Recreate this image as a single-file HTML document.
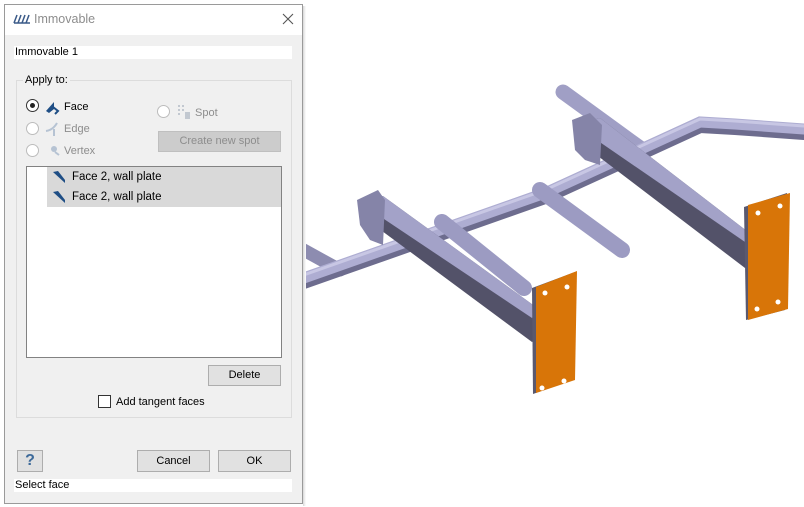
<!DOCTYPE html>
<html><head><meta charset="utf-8"><style>
*{box-sizing:border-box;margin:0;padding:0}
body{width:804px;height:507px;background:#fff;position:relative;overflow:hidden;font-family:"Liberation Sans",sans-serif;font-size:11px;color:#000}
.a{position:absolute}
.dlg{left:4px;top:4px;width:299px;height:500px;background:#f0f0f0;border:1px solid #9a9a9a}
.shadow{left:303px;top:6px;width:3px;height:500px;background:linear-gradient(90deg,#d8d8d8,#fff)}
.tb{left:5px;top:5px;width:297px;height:30px;background:#fff}
.field{background:#fff;height:13px;line-height:13px;padding-left:1px}
.btn{background:#e1e1e1;border:1px solid #adadad;text-align:center;line-height:19px}
.radio{width:13px;height:13px;border:1px solid #333;border-radius:50%;background:#fff}
.radio.dis{border-color:#bcbcbc}
.dis{color:#8d8d8d}
.row{left:47px;width:234px;height:20px;background:#d9d9d9;line-height:20px;padding-left:25px;font-size:11.5px}
.fi{position:absolute;left:6px;top:4px}
</style></head><body>
<svg class="a" style="left:295px;top:60px" width="509" height="350" viewBox="295 60 509 350">
<g stroke-linecap="round" fill="none">
 <line x1="300" y1="248" x2="340" y2="270" stroke="#8d8cb0" stroke-width="13"/>
 <line x1="563" y1="92" x2="640" y2="148" stroke="#a09fc5" stroke-width="15"/>
 <polyline points="298,283 545,196 700,125 735,127 804,132" stroke="#6d6c8e" stroke-width="16"/>
 <polyline points="298,280 545,193 700,122 735,124 804,129" stroke="#aeadd2" stroke-width="11"/>
 <polyline points="298,277 545,190 700,119 735,121 804,126" stroke="#c8c7e4" stroke-width="3"/>
 <line x1="540" y1="190" x2="622" y2="250" stroke="#9c9bc2" stroke-width="16"/>
 <line x1="442" y1="222" x2="524" y2="288" stroke="#9c9bc2" stroke-width="16"/>
</g>
<polygon points="575,125 600,118 752,235 752,262 745,268 590,150" fill="#535269"/>
<polygon points="575,125 600,118 752,235 745,242" fill="#a3a2c8"/>
<polygon points="572,120 590,113 602,125 600,165 585,160 575,150" fill="#8584a8"/>
<polygon points="360,203 383,196 540,310 540,336 532,342 378,228" fill="#535269"/>
<polygon points="360,203 383,196 540,310 532,318" fill="#a3a2c8"/>
<polygon points="357,200 378,190 385,200 383,245 370,240 360,225" fill="#8584a8"/>
<polygon points="744,207 787,193 785,310 746,320" fill="#5a596f"/>
<polygon points="748,205 790,193 788,309 748,320" fill="#d87508"/>
<polygon points="532,288 575,272 573,380 533,394" fill="#5a596f"/>
<polygon points="536,287 577,271 575,380 536,393" fill="#d87508"/>
<g fill="#fff"><circle cx="758" cy="213" r="2.5"/><circle cx="780" cy="206" r="2.5"/><circle cx="757" cy="309" r="2.5"/><circle cx="778" cy="302" r="2.5"/><circle cx="545" cy="293" r="2.5"/><circle cx="567" cy="287" r="2.5"/><circle cx="542" cy="388" r="2.5"/><circle cx="564" cy="381" r="2.5"/></g>
</svg>
<div class="a shadow"></div>
<div class="a dlg"></div>
<div class="a tb"></div>
<svg class="a" style="left:13px;top:14px" width="18" height="10"><path d="M1 9 L4 1 M5 9 L8 1 M9 9 L12 1 M13 9 L16 1 M1 9 H17" stroke="#3a5a88" stroke-width="1.5"/></svg>
<div class="a dis" style="left:34px;top:12px;font-size:12.5px">Immovable</div>
<svg class="a" style="left:282px;top:13px" width="12" height="12"><path d="M1 1L11 11M11 1L1 11" stroke="#555" stroke-width="1.1"/></svg>
<div class="a field" style="left:14px;top:46px;width:278px">Immovable 1</div>
<div class="a" style="left:16px;top:80px;width:276px;height:338px;border:1px solid #dcdcdc"></div>
<div class="a" style="left:23px;top:74px;background:#f0f0f0;padding:0 2px">Apply to:</div>
<div class="a radio" style="left:26px;top:99px"></div>
<div class="a" style="left:30px;top:103px;width:5px;height:5px;border-radius:50%;background:#222"></div>
<svg class="a" style="left:45px;top:99px" width="16" height="16"><path d="M1 12 L9 3 L9 10 L4 14Z" fill="#1f4e85"/><path d="M8 8 L13 12 L10 15" stroke="#1f4e85" stroke-width="2" fill="none"/></svg>
<div class="a" style="left:64px;top:101px">Face</div>
<div class="a radio dis" style="left:26px;top:122px"></div>
<svg class="a" style="left:45px;top:121px" width="16" height="16"><path d="M1 10 Q8 9 12 2 M9 8 L9 15" stroke="#b6c3d3" stroke-width="2" fill="none"/></svg>
<div class="a dis" style="left:64px;top:123px">Edge</div>
<div class="a radio dis" style="left:26px;top:144px"></div>
<svg class="a" style="left:49px;top:143px" width="14" height="14"><circle cx="5" cy="6" r="3" fill="#b6c3d3"/><path d="M6 9 L10 12" stroke="#b6c3d3" stroke-width="2"/></svg>
<div class="a dis" style="left:64px;top:145px">Vertex</div>
<div class="a radio dis" style="left:157px;top:105px"></div>
<svg class="a" style="left:177px;top:104px" width="16" height="16"><g fill="#c2c8d0"><rect x="1" y="1" width="2" height="2"/><rect x="5" y="1" width="2" height="2"/><rect x="1" y="5" width="2" height="2"/><rect x="5" y="5" width="2" height="2"/><rect x="1" y="9" width="2" height="2"/><rect x="8" y="8" width="5" height="7"/></g></svg>
<div class="a dis" style="left:195px;top:107px">Spot</div>
<div class="a btn dis" style="left:158px;top:131px;width:123px;height:21px;background:#cccccc;border-color:#bfbfbf">Create new spot</div>
<div class="a" style="left:26px;top:166px;width:256px;height:192px;background:#fff;border:1px solid #828282"></div>
<div class="a row" style="top:167px"><svg class="fi" width="12" height="12"><path d="M0 1L5 0L12 9L12 12Z" fill="#1f4e85"/></svg>Face 2, wall plate</div>
<div class="a row" style="top:187px"><svg class="fi" width="12" height="12"><path d="M0 1L5 0L12 9L12 12Z" fill="#1f4e85"/></svg>Face 2, wall plate</div>
<div class="a btn" style="left:208px;top:365px;width:73px;height:21px">Delete</div>
<div class="a" style="left:98px;top:395px;width:13px;height:13px;border:1px solid #333;background:#fff"></div>
<div class="a" style="left:116px;top:396px">Add tangent faces</div>
<div class="a btn" style="left:17px;top:450px;width:26px;height:22px;color:#3d6a9a;font-weight:bold;font-size:16px;line-height:20px">?</div>
<div class="a btn" style="left:137px;top:450px;width:73px;height:22px;line-height:20px">Cancel</div>
<div class="a btn" style="left:218px;top:450px;width:73px;height:22px;line-height:20px">OK</div>
<div class="a field" style="left:14px;top:479px;width:278px">Select face</div>
</body></html>
